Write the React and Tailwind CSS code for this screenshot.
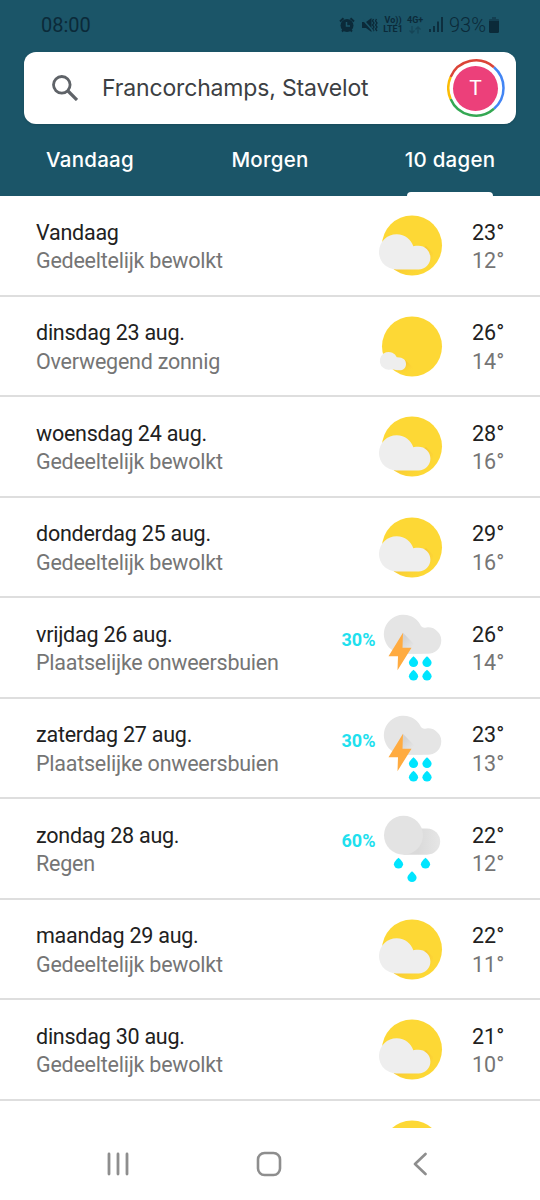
import { useId } from "react";

const days = [
  { day: "Vandaag", text: "Gedeeltelijk bewolkt", icon: "partly", high: 23, low: 12 },
  { day: "dinsdag 23 aug.", text: "Overwegend zonnig", icon: "sunny", high: 26, low: 14 },
  { day: "woensdag 24 aug.", text: "Gedeeltelijk bewolkt", icon: "partly", high: 28, low: 16 },
  { day: "donderdag 25 aug.", text: "Gedeeltelijk bewolkt", icon: "partly", high: 29, low: 16 },
  { day: "vrijdag 26 aug.", text: "Plaatselijke onweersbuien", icon: "storm", rain: 30, high: 26, low: 14 },
  { day: "zaterdag 27 aug.", text: "Plaatselijke onweersbuien", icon: "storm", rain: 30, high: 23, low: 13 },
  { day: "zondag 28 aug.", text: "Regen", icon: "rain", rain: 60, high: 22, low: 12 },
  { day: "maandag 29 aug.", text: "Gedeeltelijk bewolkt", icon: "partly", high: 22, low: 11 },
  { day: "dinsdag 30 aug.", text: "Gedeeltelijk bewolkt", icon: "partly", high: 21, low: 10 },
];

function Drop({ x, y }) {
  return (
    <path
      transform={`translate(${x} ${y})`}
      d="M0 -5.2C2.2 -3.4 4.6 -0.8 4.6 1.300A4.6 4.200 0 0 1 -4.6 1.300C-4.6 -0.8 -2.2 -3.4 0 -5.2Z"
      fill="#00e5ff"
    />
  );
}

function WeatherIcon({ type }) {
  const id = useId();
  return (
    <svg viewBox="0 0 70 72" className="h-[72px] w-[70px] shrink-0">
      <defs>
        <linearGradient id={`${id}shade`} x1="0" y1="0" x2="1" y2="1">
          <stop offset="0.3" stopColor="#f0b030" stopOpacity="0.65" />
          <stop offset="0.85" stopColor="#fdd835" stopOpacity="0" />
        </linearGradient>
        <linearGradient id={`${id}cloud`} x1="0" y1="0" x2="1" y2="0">
          <stop offset="0.4" stopColor="#dadada" />
          <stop offset="1" stopColor="#e6e6e6" />
        </linearGradient>
        <linearGradient id={`${id}bolt`} x1="0" y1="0" x2="1" y2="1">
          <stop offset="0.2" stopColor="#d2d2d2" />
          <stop offset="0.6" stopColor="#e5e5e5" />
        </linearGradient>
      </defs>
      {type === "partly" && (
        <>
          <circle cx="36" cy="35.500" r="30" fill="#fdd835" />
          <path d="M18 59L50 36L57 43L56 54Q50 62 40 65Q30 66 22 61.500Z" fill={`url(#${id}shade)`} />
          <path
            d="M20.300 59.500A17.400 17.400 0 0 1 20.800 24.300C29 24.300 35 29.500 37.300 36.300C39 35.800 40.800 35.700 42.500 35.700A11.900 11.900 0 0 1 42.500 59.500Z"
            fill="#eeeeee"
          />
        </>
      )}
      {type === "sunny" && (
        <>
          <circle cx="36" cy="35.500" r="30" fill="#fdd835" />
          <path d="M18 58L29 49L38 57Q33 65 23 61Z" fill={`url(#${id}shade)`} />
          <path
            d="M13.300 58.700A8.900 8.900 0 1 1 20.800 46.200C27 46 30.300 49 30 53.500C29.700 57.500 27 59.500 23 59.300C20.500 59.200 17 58 13.300 58.700Z"
            fill="#eeeeee"
          />
        </>
      )}
      {type === "storm" && (
        <g transform="translate(0 -2.3)">
          <path
            d="M27.500 44A19.500 19.500 0 1 1 43.300 13.300C44.500 15.500 45.800 18.400 49 18A13.200 13.200 0 1 1 51 44Z"
            fill="#e5e5e5"
          />
          <path d="M27 23L47 43.800H25Z" fill={`url(#${id}bolt)`} />
          <path d="M27 23L12.500 46.500H22L21.500 60.500L35.500 38H26.500Z" fill="#ffab40" />
          <Drop x={37.5} y={51.8} />
          <Drop x={51} y={51.8} />
          <Drop x={37.5} y={65.3} />
          <Drop x={51} y={65.3} />
        </g>
      )}
      {type === "rain" && (
        <g transform="translate(0 -2.3)">
          <path d="M27.500 44V17.700H51A13.150 13.150 0 0 1 51 44Z" fill={`url(#${id}cloud)`} />
          <circle cx="27.500" cy="24.500" r="19.500" fill="#e3e3e3" />
          <Drop x={22.5} y={52.3} />
          <Drop x={49.5} y={52.3} />
          <Drop x={36} y={65.8} />
        </g>
      )}
    </svg>
  );
}

function StatusBar() {
  return (
    <div className="flex h-[52px] items-center pr-[41px] pb-[3px] pl-[41px] font-[Roboto,sans-serif] text-[#0b2a39]">
      <span className="text-[20px] leading-6">08:00</span>
      <div className="ml-auto flex items-center">
        <svg viewBox="0 0 16 16" className="mr-[7px] h-4 w-4">
          <path d="M1 4.500L4.500 1.300M15 4.500L11.500 1.300M3 14.500L4.500 13M13 14.500L11.500 13" stroke="currentColor" strokeWidth="2" />
          <circle cx="8" cy="8.500" r="6.500" fill="currentColor" />
          <path d="M7.500 5V9H11" fill="none" stroke="#1b5568" strokeWidth="1.500" />
        </svg>
        <svg viewBox="0 0 16 16" className="mr-[5px] h-4 w-4">
          <path d="M0 5H4L9.500 1V15L4 11H0Z" fill="currentColor" />
          <path d="M11.500 2L10.500 4L12 6L10.500 8L12 10L10.500 12L12 14M14.500 2L13.500 4L15 6L13.500 8L15 10L13.500 12L15 14" fill="none" stroke="currentColor" strokeWidth="1.300" />
          <path d="M0 1.500L11 14" stroke="#1b5568" strokeWidth="1.500" />
        </svg>
        <div className="mr-px flex w-5 flex-col items-center text-[9px] leading-[9px] font-bold whitespace-nowrap">
          <span className="h-[9px]">Vo))</span>
          <span className="h-[9px]">LTE1</span>
        </div>
        <div className="ml-[3px] w-[17px] text-[9px] leading-[9px] font-bold whitespace-nowrap">
          <div>4G+</div>
          <svg viewBox="0 0 16 8" className="mt-px h-2 w-4 opacity-35">
            <path d="M5 0V7M2.500 4.500L5 7L7.500 4.500M11 7.500V1M8.500 3.500L11 1L13.500 3.500" fill="none" stroke="currentColor" strokeWidth="1.300" />
          </svg>
        </div>
        <svg viewBox="0 0 14 15" className="ml-[5px] h-[15px] w-[14px]">
          <path d="M1 15V12M5 15V9M9 15V4.500M13 15V0" stroke="currentColor" strokeWidth="1.700" />
        </svg>
        <span className="ml-[6px] text-[20px] leading-6 font-light">93%</span>
        <svg viewBox="0 0 10 16" className="ml-[3px] h-4 w-[10px]">
          <path d="M3 0H7V2H9Q10 2 10 3V4H0V3Q0 2 1 2H3Z" fill="currentColor" opacity="0.5" />
          <path d="M0 4H10V14.500Q10 16 8.500 16H1.500Q0 16 0 14.500Z" fill="currentColor" />
        </svg>
      </div>
    </div>
  );
}

function Avatar() {
  return (
    <div className="relative flex h-[58px] w-[58px] items-center justify-center">
      <svg viewBox="0 0 58 58" className="absolute inset-0" fill="none" strokeWidth="2.500">
        <path d="M3.600 18A27.500 27.500 0 0 1 47 8.200" stroke="#db4437" />
        <path d="M47 8.200A27.500 27.500 0 0 1 47 49.800" stroke="#4285f4" />
        <path d="M47 49.800A27.500 27.500 0 0 1 3.600 40" stroke="#34a853" />
        <path d="M3.600 40A27.500 27.500 0 0 1 3.600 18" stroke="#fbbc05" />
      </svg>
      <div className="flex h-[45px] w-[45px] items-center justify-center rounded-full bg-[#ec407a] pt-0.5 font-[Roboto,sans-serif] text-[21px] text-white">
        T
      </div>
    </div>
  );
}

function DayRow({ item }) {
  return (
    <div className="flex h-[100.500px] items-start border-b-2 border-[#dedede] pl-9">
      <div className="pt-[22.500px] text-[21.500px] leading-[28.500px] tracking-[-0.24px]">
        <p className="text-[#212121]">{item.day}</p>
        <p className="text-[#757575]">{item.text}</p>
      </div>
      <div className="ml-auto flex pt-[14px]">
        {item.rain != null && (
          <span className="pt-4 pr-[0.500px] text-[18px] leading-6 font-bold text-[#1fe0ee]">{item.rain}%</span>
        )}
        <WeatherIcon type={item.icon} />
      </div>
      <div className="ml-[26px] w-[68px] pt-[22.500px] text-[21.500px] leading-[28.500px]">
        <p className="text-[#212121]">{item.high}°</p>
        <p className="text-[#757575]">{item.low}°</p>
      </div>
    </div>
  );
}

export default function App() {
  return (
    <div className="flex h-[1200px] w-[540px] flex-col overflow-hidden bg-white font-[Roboto,sans-serif]">
      <header className="h-[196px] shrink-0 bg-[#1b5568]">
        <StatusBar />
        <div className="mx-6 flex h-[72px] items-center rounded-xl bg-white pr-[11.500px] pl-[28px] shadow-sm">
          <svg viewBox="0 0 26 26" className="h-[26px] w-[26px]" fill="none" stroke="#5f6368">
            <circle cx="9.800" cy="9.800" r="8.300" strokeWidth="2.800" />
            <path d="M15.500 15.500L25 25" strokeWidth="3.200" />
          </svg>
          <span className="ml-6 pt-px font-[Inter,sans-serif] text-[23px] tracking-[-0.16px] text-[#3c4043]">Francorchamps, Stavelot</span>
          <div className="ml-auto">
            <Avatar />
          </div>
        </div>
        <nav className="grid h-[72px] grid-cols-3 text-center font-[Inter,sans-serif] text-[20.500px] leading-[72px] font-medium tracking-[0.25px] text-white">
          <span>Vandaag</span>
          <span>Morgen</span>
          <span className="relative">
            10 dagen
            <span className="absolute bottom-0 left-[47px] h-[4.500px] w-[86px] rounded-t bg-white" />
          </span>
        </nav>
      </header>

      <main className="h-[932px] shrink-0 overflow-hidden">
        {days.map((item) => (
          <DayRow key={item.day} item={item} />
        ))}
        <div className="flex justify-end pt-[14px] pr-[94px]">
          <WeatherIcon type="partly" />
        </div>
      </main>

      <footer className="flex h-[72px] items-center text-[#8e8e8e]">
        <svg viewBox="0 0 22 24" className="ml-[107px] h-6 w-[22px]" stroke="currentColor" strokeWidth="2.800" strokeLinecap="round">
          <path d="M2 2V22M11 2V22M20 2V22" />
        </svg>
        <svg viewBox="0 0 26 26" className="ml-[127px] h-[26px] w-[26px]" fill="none" stroke="currentColor" strokeWidth="2.600">
          <rect x="2" y="2" width="22" height="22" rx="6.500" />
        </svg>
        <svg viewBox="0 0 14 24" className="ml-[131px] h-6 w-[14px]" fill="none" stroke="currentColor" strokeWidth="2.600" strokeLinecap="round" strokeLinejoin="round">
          <path d="M12.500 2L2 12L12.500 22" />
        </svg>
      </footer>
    </div>
  );
}
